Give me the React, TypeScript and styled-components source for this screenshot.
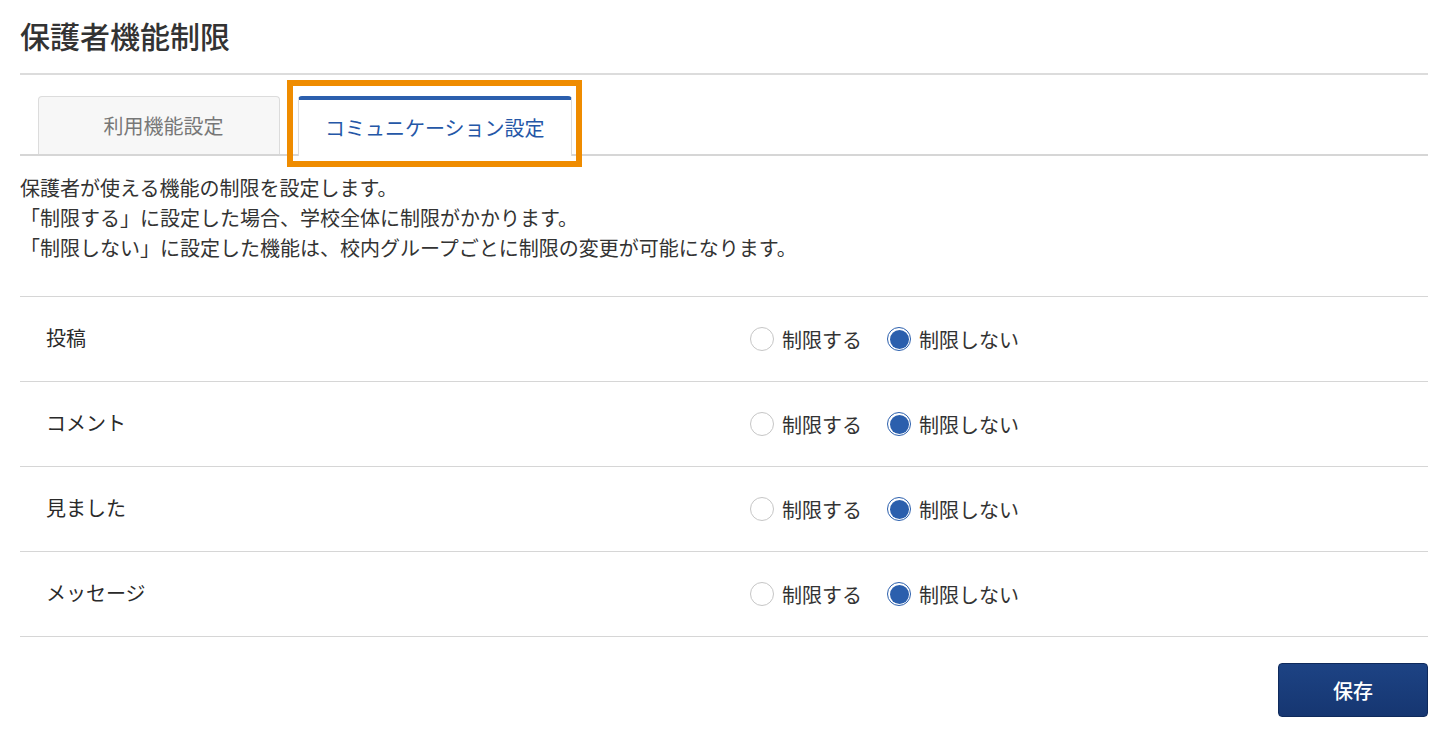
import React, { useState } from 'react';
import styled, { createGlobalStyle } from 'styled-components';

const GlobalStyle = createGlobalStyle`
  body {
    margin: 0;
    background: #fff;
    color: #333;
    font-family: "Noto Sans CJK JP", "Noto Sans", sans-serif;
  }
`;

type Limit = 'on' | 'off';

interface Feature {
  id: string;
  label: string;
}

const features: Feature[] = [
  { id: 'post', label: '投稿' },
  { id: 'comment', label: 'コメント' },
  { id: 'seen', label: '見ました' },
  { id: 'message', label: 'メッセージ' },
];

const App: React.FC = () => {
  const [tab, setTab] = useState<'usage' | 'communication'>('communication');
  const [limits, setLimits] = useState<Record<string, Limit>>({
    post: 'off',
    comment: 'off',
    seen: 'off',
    message: 'off',
  });

  return (
    <Page>
      <GlobalStyle />
      <Title>保護者機能制限</Title>

      <TabBar>
        <Tab $active={tab === 'usage'} onClick={() => setTab('usage')}>
          利用機能設定
        </Tab>
        <Tab $active={tab === 'communication'} onClick={() => setTab('communication')}>
          コミュニケーション設定
          {tab === 'communication' && <Highlight />}
        </Tab>
      </TabBar>

      <Description>
        <p>保護者が使える機能の制限を設定します。</p>
        <p>「制限する」に設定した場合、学校全体に制限がかかります。</p>
        <p>「制限しない」に設定した機能は、校内グループごとに制限の変更が可能になります。</p>
      </Description>

      <List>
        {features.map((f) => (
          <Row key={f.id}>
            <RowLabel>{f.label}</RowLabel>
            <Options>
              <Option>
                <Radio
                  type="radio"
                  name={f.id}
                  checked={limits[f.id] === 'on'}
                  onChange={() => setLimits({ ...limits, [f.id]: 'on' })}
                />
                制限する
              </Option>
              <Option>
                <Radio
                  type="radio"
                  name={f.id}
                  checked={limits[f.id] === 'off'}
                  onChange={() => setLimits({ ...limits, [f.id]: 'off' })}
                />
                制限しない
              </Option>
            </Options>
          </Row>
        ))}
      </List>

      <Footer>
        <SaveButton type="button">保存</SaveButton>
      </Footer>
    </Page>
  );
};

const Page = styled.div`
  padding: 0 28px 0 20px;
`;

const Title = styled.h1`
  margin: 0;
  padding: 13px 0 15px;
  font-size: 30px;
  line-height: 45px;
  font-weight: 500;
  color: #333;
  border-bottom: 2px solid #dcdcdc;
`;

const TabBar = styled.div`
  display: flex;
  align-items: flex-end;
  gap: 18px;
  margin-top: 21px;
  padding-left: 18px;
  border-bottom: 2px solid #d6d6d6;
`;

const Tab = styled.div<{ $active: boolean }>`
  position: relative;
  box-sizing: border-box;
  display: flex;
  align-items: center;
  justify-content: center;
  min-width: 242px;
  font-size: 20px;
  cursor: pointer;
  border: 1px solid #dcdcdc;
  border-bottom: none;
  border-radius: 4px 4px 0 0;
  background: ${(p) => (p.$active ? '#fff' : '#f7f7f7')};
  color: ${(p) => (p.$active ? '#2557a7' : '#777')};
  height: ${(p) => (p.$active ? '60px' : '58px')};
  margin-bottom: ${(p) => (p.$active ? '-2px' : '0')};
  border-top: ${(p) => (p.$active ? '4px solid #2b5fad' : '1px solid #dcdcdc')};
  padding: ${(p) => (p.$active ? '0 26px 2px' : '0 22px 0 31px')};
`;

const Highlight = styled.span`
  position: absolute;
  top: -20px;
  left: -12px;
  right: -11px;
  bottom: -11px;
  border: 6px solid #ef8c00;
  pointer-events: none;
`;

const Description = styled.div`
  margin-top: 17px;
  font-size: 20px;
  line-height: 30px;
  color: #333;

  p {
    margin: 0;
  }
`;

const List = styled.div`
  margin-top: 33px;
  border-bottom: 1px solid #d6d6d6;
`;

const Row = styled.div`
  display: grid;
  grid-template-columns: 704px 1fr;
  align-items: center;
  height: 85px;
  box-sizing: border-box;
  padding-left: 26px;
  border-top: 1px solid #d6d6d6;
`;

const RowLabel = styled.div`
  font-size: 20px;
  font-weight: 400;
  color: #2a2a2a;
  margin-top: -4px;
`;

const Options = styled.div`
  display: flex;
  align-items: center;
  gap: 25px;
`;

const Option = styled.label`
  display: flex;
  align-items: center;
  gap: 8px;
  font-size: 20px;
  color: #333;
  cursor: pointer;
`;

const Radio = styled.input`
  appearance: none;
  -webkit-appearance: none;
  margin: 0;
  position: relative;
  box-sizing: border-box;
  width: 24px;
  height: 24px;
  border-radius: 50%;
  border: 1px solid #c6c6c6;
  background: #fff;
  cursor: pointer;

  &:checked {
    border: 1.5px solid #2b5fad;
  }

  &:checked::after {
    content: '';
    position: absolute;
    inset: 1.5px;
    border-radius: 50%;
    background: #2b5fad;
  }
`;

const Footer = styled.div`
  display: flex;
  justify-content: flex-end;
  padding-top: 26px;
`;

const SaveButton = styled.button`
  width: 150px;
  height: 54px;
  border: 1px solid #0f2a5c;
  border-radius: 4px;
  background: linear-gradient(#1d4384, #163671);
  color: #fff;
  font-family: inherit;
  font-size: 20px;
  font-weight: 500;
  cursor: pointer;
`;

export default App;
